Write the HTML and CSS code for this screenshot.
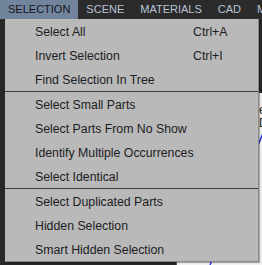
FILE: index.html
```html
<!DOCTYPE html>
<html lang="en">
<head>
    <meta charset="UTF-8">
    <title>Selection Menu</title>
    <link rel="stylesheet" href="styles.css">
</head>
<body>

<div class="menubar">
    <div class="menu-title active">SELECTION</div>
    <div class="menu-title">SCENE</div>
    <div class="menu-title">MATERIALS</div>
    <div class="menu-title">CAD</div>
    <div class="menu-title">M</div>
</div>

<div class="workspace">
    <div class="side-panel"></div>
    <div class="viewport">
        <div class="viewport-text">e<br>D</div>
        <svg class="viewport-line" width="86" height="172" viewBox="0 0 86 172">
            <path d="M86 40 L33 172" stroke="#2a3adf" stroke-width="1.5" fill="none"/>
        </svg>
    </div>
</div>

<div class="dropdown">
    <div class="item"><span class="label">Select All</span><span class="shortcut">Ctrl+A</span></div>
    <div class="item"><span class="label">Invert Selection</span><span class="shortcut">Ctrl+I</span></div>
    <div class="item"><span class="label">Find Selection In Tree</span></div>
    <div class="separator"></div>
    <div class="item"><span class="label">Select Small Parts</span></div>
    <div class="item"><span class="label">Select Parts From No Show</span></div>
    <div class="item"><span class="label">Identify Multiple Occurrences</span></div>
    <div class="item"><span class="label">Select Identical</span></div>
    <div class="separator"></div>
    <div class="item"><span class="label">Select Duplicated Parts</span></div>
    <div class="item"><span class="label">Hidden Selection</span></div>
    <div class="item"><span class="label">Smart Hidden Selection</span></div>
</div>

</body>
</html>
```

FILE: styles.css
```css
body {
    margin: 0;
    width: 262px;
    height: 265px;
    overflow: hidden;
    background-color: #282828;
    font-family: "Liberation Sans", Arial, sans-serif;
    font-size: 12px;
    position: relative;
}
.menubar {
    display: flex;
    height: 19px;
    overflow: hidden;
    background-color: #2b2b2b;
    white-space: nowrap;
    font-size: 11px;
}
.menu-title {
    padding: 0 8px;
    line-height: 19px;
    height: 19px;
    color: #b9c3d6;
}
.menu-title.active {
    background-color: #71849c;
    color: #14141c;
}
.workspace {
    display: flex;
    height: 246px;
}
.side-panel {
    width: 176px;
    flex-shrink: 0;
    border-right: 1px solid #555;
}
.viewport {
    flex: 1;
    margin-top: 74px;
    background-color: #f2f2f2;
    position: relative;
    overflow: hidden;
}
.viewport-text {
    position: absolute;
    left: 82px;
    top: 11px;
    line-height: 13px;
    color: #222;
}
.viewport-line {
    position: absolute;
    left: 0;
    top: 0;
}
.dropdown {
    position: absolute;
    left: 5px;
    top: 19px;
    width: 253px;
    background-color: #b9b9b9;
    border-right: 1px solid #8a8a8a;
    border-bottom: 1px solid #8a8a8a;
    box-shadow: 1px 1px 1px rgba(0, 0, 0, 0.3);
}
.item {
    display: flex;
    height: 23px;
    padding-top: 1px;
    line-height: 24px;
    color: #1c1c22;
    font-size: 12.3px;
}
.label {
    width: 158px;
    padding-left: 30px;
    white-space: nowrap;
}
.separator {
    height: 1px;
    background-color: #3c3c3c;
}
```
